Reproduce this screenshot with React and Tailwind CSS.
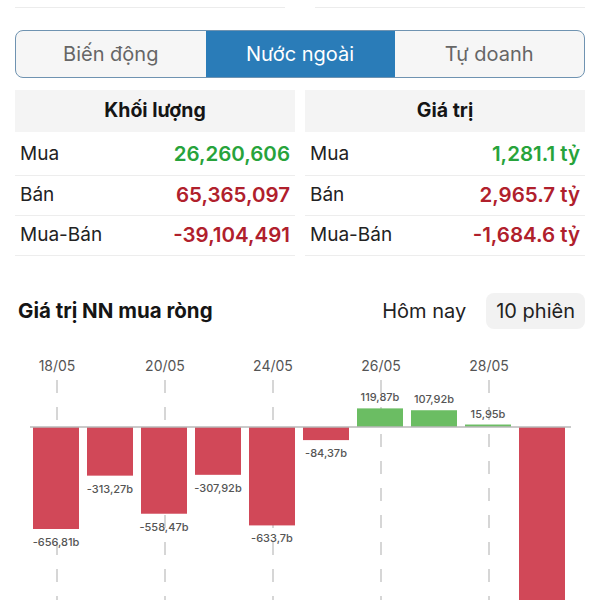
import React from 'react'

const font = { fontFamily: 'Inter, "Noto Sans", sans-serif' }

const tabs = ['Biến động', 'Nước ngoài', 'Tự doanh']

const volumeRows = [
  { label: 'Mua', value: '26,260,606', color: 'text-[#27a33b]' },
  { label: 'Bán', value: '65,365,097', color: 'text-[#b0202c]' },
  { label: 'Mua-Bán', value: '-39,104,491', color: 'text-[#b0202c]' },
]

const valueRows = [
  { label: 'Mua', value: '1,281.1 tỷ', color: 'text-[#27a33b]' },
  { label: 'Bán', value: '2,965.7 tỷ', color: 'text-[#b0202c]' },
  { label: 'Mua-Bán', value: '-1,684.6 tỷ', color: 'text-[#b0202c]' },
]

// last bar runs off the bottom, its label is not visible
const bars = [
  { v: -656.81, label: '-656,81b' },
  { v: -313.27, label: '-313,27b' },
  { v: -558.47, label: '-558,47b' },
  { v: -307.92, label: '-307,92b' },
  { v: -633.7, label: '-633,7b' },
  { v: -84.37, label: '-84,37b' },
  { v: 119.87, label: '119,87b' },
  { v: 107.92, label: '107,92b' },
  { v: 15.95, label: '15,95b' },
  { v: -1684.6, label: '' },
]

const dates = ['18/05', '20/05', '24/05', '26/05', '28/05']

function StatTable({ title, rows }) {
  return (
    <div className="flex-1">
      <div className="h-[42px] bg-[#f4f4f4] flex items-center justify-center text-[19.5px] font-bold text-[#151515]">
        {title}
      </div>
      {rows.map((r, i) => (
        <div
          key={r.label}
          className={`flex items-center justify-between px-[5px] border-b border-[#ededed] ${i === 0 ? 'h-[44px] pt-[2px]' : 'h-[40px]'}`}
        >
          <span className="text-[19px] text-[#222]">{r.label}</span>
          <span className={`text-[20.5px] font-semibold ${r.color}`}>{r.value}</span>
        </div>
      ))}
    </div>
  )
}

function Chart() {
  const scale = 102 / 656.81
  const base = 87
  return (
    <svg width="600" height="260" className="block" style={font}>
      {dates.map((d, i) => {
        const x = 57 + i * 108
        return (
          <g key={d}>
            <text x={x} y={31} textAnchor="middle" fontSize="14" fill="#555">{d}</text>
            <line x1={x} y1={40} x2={x} y2={260} stroke="#c9c9c9" strokeWidth="1.5" strokeDasharray="13 14" />
          </g>
        )
      })}
      {bars.map((b, i) => {
        const cx = 56 + i * 54
        const h = Math.abs(b.v) * scale
        const pos = b.v > 0
        const y = pos ? base - h : base
        return (
          <g key={i}>
            <rect x={cx - 23} y={y} width="46" height={Math.max(h, 2)} fill={pos ? '#6bbd63' : '#d14858'} />
            {b.label && (
              <text
                x={cx}
                y={pos ? base - h - 7 : base + h + 17}
                textAnchor="middle"
                fontSize="11"
                fontWeight="500"
                fill="#555"
              >
                {b.label}
              </text>
            )}
          </g>
        )
      })}
      <line x1="30" y1={base} x2="571" y2={base} stroke="#b9b9b9" strokeWidth="1.5" />
    </svg>
  )
}

export default function App() {
  return (
    <div className="w-[600px] h-[600px] overflow-hidden bg-white" style={font}>
      {/* previous card edges */}
      <div className="h-[30px] flex gap-[30px] px-[15px] pt-[7px]">
        <div className="flex-1 border-t border-[#ececec]" />
        <div className="flex-1 border-t border-[#ececec]" />
      </div>

      {/* tabs */}
      <div className="mx-[15px] h-[48px] flex border-[1.5px] border-[#6f93b1] rounded-[8px] overflow-hidden bg-[#f6f6f6]">
        {tabs.map((t, i) => (
          <div
            key={t}
            className={`flex items-center justify-center text-[20px] ${
              i === 1 ? 'w-[189px] bg-[#2a7cb8] text-white' : 'flex-1 text-[#666]'
            }`}
          >
            {t}
          </div>
        ))}
      </div>

      {/* tables */}
      <div className="flex gap-[10px] px-[15px] mt-[12px]">
        <StatTable title="Khối lượng" rows={volumeRows} />
        <StatTable title="Giá trị" rows={valueRows} />
      </div>

      {/* chart header */}
      <div className="flex items-center justify-between pl-[18px] pr-[15px] mt-[37px]">
        <span className="text-[20.5px] font-bold text-[#151515]">Giá trị NN mua ròng</span>
        <div className="flex items-center gap-[20px]">
          <span className="text-[20px] text-[#222]">Hôm nay</span>
          <span className="h-[36px] px-[10px] flex items-center rounded-[8px] bg-[#f2f2f2] text-[20px] text-[#222]">10 phiên</span>
        </div>
      </div>

      <div className="mt-[11px]">
        <Chart />
      </div>
    </div>
  )
}
